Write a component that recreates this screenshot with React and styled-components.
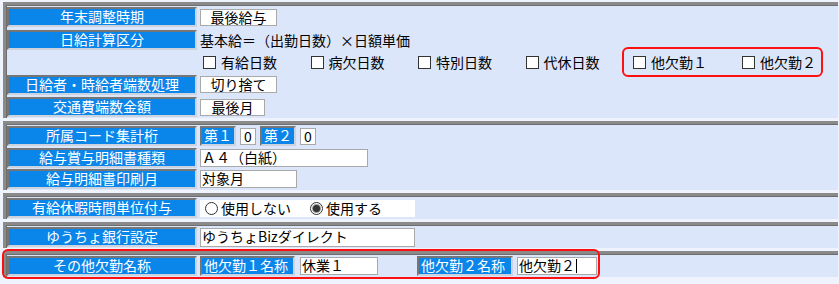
import React from 'react'
import styled, { createGlobalStyle } from 'styled-components'

const GlobalStyle = createGlobalStyle`
  html, body {
    margin: 0;
    padding: 0;
    background: #eef3fd;
  }
  body {
    font-family: "Noto Sans CJK JP", "Noto Sans", sans-serif;
    font-size: 14px;
    color: #000;
  }
`

const Page = styled.div`
  width: 839px;
  height: 284px;
  padding-top: 2px;
  box-sizing: border-box;
  overflow: hidden;
`

const Section = styled.section`
  position: relative;
  margin: 0 1px 3px 3px;
  border-top: 3px solid #8a8a8a;
  border-left: 3px solid #8a8a8a;
  box-shadow: inset 1px 1px 0 #6e6e6e;
  background: #dce6fb;
  padding: 2px 0 1px 1px;
  display: flex;
  flex-direction: column;
  gap: ${props => props.$gap ?? 2}px;
`

const Row = styled.div`
  display: flex;
  align-items: center;
  height: 20px;
  gap: 3px;
`

const Label = styled.div`
  box-sizing: border-box;
  width: ${props => props.$width ?? 190}px;
  height: 20px;
  flex: none;
  background: #0a85ea;
  color: #fff;
  border: 2px solid;
  border-color: #767676 #cdd3de #cdd3de #767676;
  line-height: 15px;
  text-align: ${props => props.$left ? 'left' : 'center'};
  padding-left: ${props => props.$left ? 2 : 0}px;
  white-space: nowrap;
`

const Blank = styled.div`
  width: 190px;
  flex: none;
`

const ValueBox = styled.div`
  box-sizing: border-box;
  width: ${props => props.$width}px;
  height: ${props => props.$height ?? 17}px;
  flex: none;
  background: #fff;
  border: 1px solid #a9a9a9;
  line-height: 15px;
  text-align: ${props => props.$center ? 'center' : 'left'};
  padding-left: ${props => props.$center ? 0 : 1}px;
  white-space: nowrap;
`

const PlainText = styled.div`
  white-space: nowrap;
  line-height: 20px;
`

const Group = styled.div`
  display: flex;
  align-items: center;
  gap: ${props => props.$gap ?? 4}px;
  margin-left: ${props => props.$ml ?? 0}px;
`

const CheckItem = styled.label`
  display: flex;
  align-items: center;
  width: ${props => props.$width ? props.$width + 'px' : 'auto'};
  flex: none;
  gap: 5px;
  white-space: nowrap;
`

const Box = styled.span`
  display: inline-block;
  box-sizing: border-box;
  width: 13px;
  height: 13px;
  background: #fff;
  border: 1px solid #333;
`

const Highlight = styled.div`
  display: flex;
  align-items: center;
  box-sizing: border-box;
  height: 30px;
  padding: 0 5px 0 9px;
  border: 2px solid #ff1010;
  border-radius: 6px;
`

const RadioArea = styled.div`
  display: flex;
  align-items: center;
  box-sizing: border-box;
  width: 215px;
  height: 17px;
  background: #fff;
  padding-left: 5px;
`

const RadioItem = styled.label`
  display: flex;
  align-items: center;
  gap: 3px;
  width: ${props => props.$width ? props.$width + 'px' : 'auto'};
  white-space: nowrap;
`

const Circle = styled.span`
  position: relative;
  box-sizing: border-box;
  width: 13px;
  height: 13px;
  border-radius: 50%;
  border: 1px solid #333;
  background: #fff;

  &::after {
    content: '';
    display: ${props => props.$on ? 'block' : 'none'};
    position: absolute;
    left: 2px;
    top: 2px;
    width: 7px;
    height: 7px;
    border-radius: 50%;
    background: #333;
    box-shadow: 0 0 0 1px #999;
  }
`

const Caret = styled.span`
  display: inline-block;
  width: 1px;
  height: 14px;
  background: #000;
  vertical-align: -2px;
  margin-left: 1px;
`

const Annotation = styled.div`
  position: absolute;
  left: -4px;
  top: -5px;
  width: 598px;
  height: 30px;
  box-sizing: border-box;
  border: 2px solid #ff1010;
  border-radius: 6px;
  pointer-events: none;
`

function Check({ children, width }) {
  return (
    <CheckItem $width={width}>
      <Box />
      {children}
    </CheckItem>
  )
}

export default function App() {
  return (
    <Page>
      <GlobalStyle />
      <Section $gap={2.5}>
        <Row>
          <Label>年末調整時期</Label>
          <ValueBox $width={77} $center>最後給与</ValueBox>
        </Row>
        <Row>
          <Label>日給計算区分</Label>
          <PlainText>基本給＝（出勤日数）×日額単価</PlainText>
        </Row>
        <Row>
          <Blank />
          <Group $ml={3} $gap={0}>
            <Check width={107.5}>有給日数</Check>
            <Check width={107.5}>病欠日数</Check>
            <Check width={107.5}>特別日数</Check>
            <Check width={96.5}>代休日数</Check>
            <Highlight>
              <Check width={109}>他欠勤１</Check>
              <Check>他欠勤２</Check>
            </Highlight>
          </Group>
        </Row>
        <Row>
          <Label>日給者・時給者端数処理</Label>
          <ValueBox $width={77} $center>切り捨て</ValueBox>
        </Row>
        <Row>
          <Label>交通費端数金額</Label>
          <ValueBox $width={65} $center>最後月</ValueBox>
        </Row>
      </Section>

      <Section $gap={1.5}>
        <Row>
          <Label>所属コード集計桁</Label>
          <Group $gap={4}>
            <Label $width={36} $left>第１</Label>
            <ValueBox $width={16} $center>0</ValueBox>
            <Label $width={36} $left>第２</Label>
            <ValueBox $width={16} $center>0</ValueBox>
          </Group>
        </Row>
        <Row>
          <Label>給与賞与明細書種類</Label>
          <ValueBox $width={168} $height={18}>Ａ４（白紙）</ValueBox>
        </Row>
        <Row>
          <Label>給与明細書印刷月</Label>
          <ValueBox $width={97} $height={18}>対象月</ValueBox>
        </Row>
      </Section>

      <Section>
        <Row>
          <Label>有給休暇時間単位付与</Label>
          <RadioArea>
            <RadioItem $width={105}>
              <Circle />
              使用しない
            </RadioItem>
            <RadioItem>
              <Circle $on />
              使用する
            </RadioItem>
          </RadioArea>
        </Row>
      </Section>

      <Section>
        <Row>
          <Label>ゆうちょ銀行設定</Label>
          <ValueBox $width={215} $height={19}>ゆうちょBizダイレクト</ValueBox>
        </Row>
      </Section>

      <Section>
        <Row>
          <Label>その他欠勤名称</Label>
          <Group $gap={5}>
            <Label $width={95} $left>他欠勤１名称</Label>
            <ValueBox $width={78} $height={18}>休業１</ValueBox>
          </Group>
          <Group $gap={4} $ml={36}>
            <Label $width={96} $left>他欠勤２名称</Label>
            <ValueBox $width={80} $height={18}>
              他欠勤２<Caret />
            </ValueBox>
          </Group>
        </Row>
        <Annotation />
      </Section>
    </Page>
  )
}
